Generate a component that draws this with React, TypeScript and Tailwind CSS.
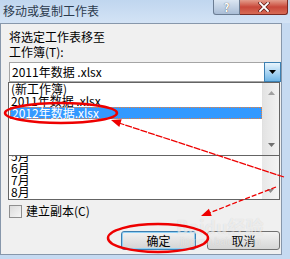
import React from 'react';

const font = "font-['Noto_Sans_CJK_SC','Liberation_Sans',sans-serif]";

const Tri = ({ down = true, color = '#8c8c8c' }: { down?: boolean; color?: string }) => (
  <svg width="7" height="4" viewBox="0 0 7 4">
    <polygon points={down ? '0,0 7,0 3.5,4' : '0,4 7,4 3.5,0'} fill={color} />
  </svg>
);

const App = () => {
  const months = ['5月', '6月', '7月', '8月'];

  return (
    <div className={`relative w-[290px] h-[259px] overflow-hidden bg-[#c6daf1] ${font} text-[12px] text-black`}>
      {/* title bar */}
      <div className="h-[23px] flex justify-between bg-gradient-to-b from-[#c0d6ef] to-[#d3e3f5]">
        <div className="pl-[3px] pt-[3px] leading-[16px] text-[12px] text-[#2b3a4d]">移动或复制工作表</div>
        <div className="flex mr-[2px] h-[15px]">
          <div className="w-[27px] h-[15px] flex items-center justify-center rounded-bl-[3px] border border-t-0 border-[#6b7d93] bg-gradient-to-b from-[#dbe6f2] to-[#a9bdd6] text-white font-bold text-[11px] leading-[13px] [text-shadow:0_0_1px_#333]">?</div>
          <div className="w-[48px] h-[15px] flex items-center justify-center rounded-br-[3px] border border-t-0 border-l-0 border-[#7a2a22] bg-gradient-to-b from-[#e39c8c] via-[#c8473a] to-[#d76b55]">
            <svg width="12" height="10" viewBox="0 0 12 10">
              <path d="M2 1 L10 9 M10 1 L2 9" stroke="#5a1a14" strokeWidth="3.2" strokeLinecap="square" />
              <path d="M2 1 L10 9 M10 1 L2 9" stroke="#ffffff" strokeWidth="1.8" strokeLinecap="square" />
            </svg>
          </div>
        </div>
      </div>

      <div className="flex">
        {/* dialog body */}
        <div className="w-[282px] h-[232px] border border-[#8797ab] bg-[#f0f0f0] pl-[8px] pt-[5px]">
          <div className="leading-[15px]">将选定工作表移至</div>
          <div className="leading-[15px]">工作簿(T):</div>

          {/* combo */}
          <div className="mt-[3px] w-[272px] h-[20px] flex border border-[#a5a5a5] bg-white">
            <div className="flex-1 pl-[2px] leading-[18px]">2011年数据 .xlsx</div>
            <div className="w-[17px] h-[20px] -mt-[1px] -mr-[1px] flex items-center justify-center border border-[#3c7fb1] bg-gradient-to-b from-[#e8f5fd] to-[#6fb6e6]">
              <Tri color="#000" />
            </div>
          </div>

          {/* listbox behind + popup list */}
          <div className="relative w-[272px] -ml-[1px] h-[118px] border border-[#646464] bg-white">
            <div className="flex h-full">
              <div className="flex-1 flex flex-col justify-end pl-[2px] pb-[1px]">
                {months.map(m => (
                  <div key={m} className="leading-[12px] h-[12px]">{m}</div>
                ))}
              </div>
              <div className="w-[17px] flex flex-col justify-end items-center pb-[6px] bg-gradient-to-r from-[#e8e8e8] to-[#f4f4f4]">
                <Tri />
              </div>
            </div>

            <div className="absolute left-[-1px] top-[-1px] w-[272px] h-[74px] flex border border-[#646464] bg-white">
              <div className="flex-1 pl-[1px]">
                <div className="leading-[12px] h-[12px] pl-[1px]">(新工作簿)</div>
                <div className="leading-[12px] h-[12px] pl-[1px]">2011年数据 .xlsx</div>
                <div className="leading-[10px] h-[12px] pl-[1px] bg-[#3399ff] text-white border border-dotted border-[#e8803c]">2012年数据.xlsx</div>
              </div>
              <div className="w-[17px] flex flex-col justify-between items-center py-[8px] bg-gradient-to-r from-[#e3e3e3] to-[#f2f2f2] border-l border-[#e0e0e0]">
                <Tri down={false} color="#a0a0a0" />
                <Tri color="#707070" />
              </div>
            </div>
          </div>

          {/* checkbox */}
          <div className="mt-[4px] flex items-center gap-[4px] h-[14px]">
            <div className="w-[13px] h-[13px] border border-[#8f8f8f] bg-gradient-to-br from-[#dcdcdc] to-[#f6f6f6]" />
            <div className="leading-[14px]">建立副本(C)</div>
          </div>

          {/* buttons */}
          <div className="mt-[13px] flex justify-end gap-[11px] pr-[1px]">
            <div className="w-[75px] h-[19px] flex items-center justify-center rounded-[3px] border border-[#3c7fb1] bg-gradient-to-b from-[#f2f2f2] to-[#d4d4d4] shadow-[inset_0_0_0_1px_#8fd0f5] leading-none">确定</div>
            <div className="w-[73px] h-[19px] flex items-center justify-center rounded-[3px] border border-[#707070] bg-gradient-to-b from-[#f2f2f2] to-[#d6d6d6] leading-none">取消</div>
          </div>
        </div>
      </div>

      {/* watermark */}
      <div className="absolute left-[176px] top-[216px] text-[18px] leading-[20px] font-bold text-white/60 [text-shadow:0_0_1px_rgba(0,0,0,0.15)]">Baidu经验</div>
      <div className="absolute left-[180px] top-[237px] text-[10px] leading-[10px] text-white/50 [text-shadow:0_0_1px_rgba(0,0,0,0.15)] font-['Liberation_Sans',sans-serif]">jingyan.baidu.com</div>

      {/* red annotations */}
      <svg className="absolute inset-0 pointer-events-none" width="290" height="259" viewBox="0 0 290 259">
        <ellipse cx="61" cy="113" rx="56" ry="10" fill="none" stroke="#ee0000" strokeWidth="2.5" />
        <ellipse cx="158" cy="238" rx="50" ry="14" fill="none" stroke="#ee0000" strokeWidth="2.5" />
        <line x1="284" y1="177" x2="119" y2="123" stroke="#ee0000" strokeWidth="1.3" strokeDasharray="7 1" />
        <polygon points="111,120 121.7,119.3 119.3,126.9" fill="#ee0000" />
        <line x1="276" y1="187" x2="209" y2="213" stroke="#ee0000" strokeWidth="1.3" strokeDasharray="5 2" />
        <polygon points="201,216 211.7,216.1 208.9,208.7" fill="#ee0000" />
      </svg>
    </div>
  );
};

export default App;
